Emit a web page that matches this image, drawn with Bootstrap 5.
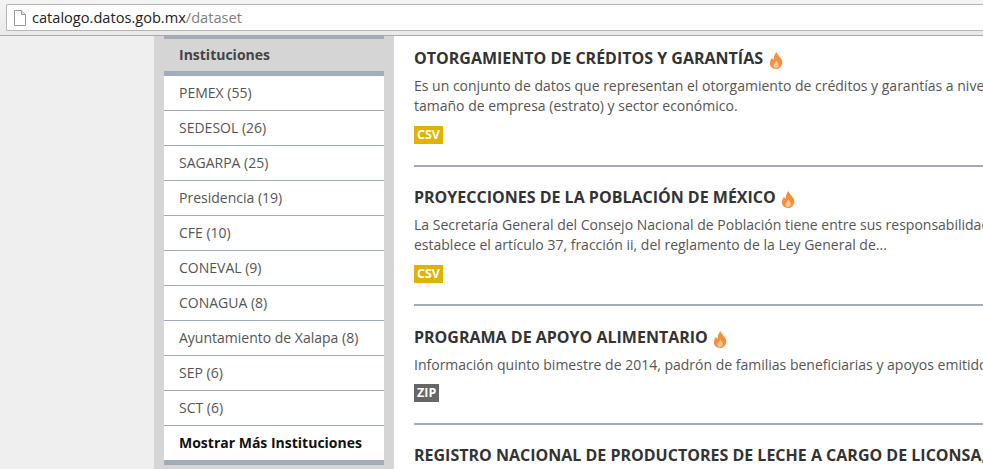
<!DOCTYPE html>
<html lang="es">
<head>
<meta charset="utf-8">
<link href="https://cdn.jsdelivr.net/npm/bootstrap@5.3.0/dist/css/bootstrap.min.css" rel="stylesheet">
<style>
html,body{height:469px;overflow:hidden}
body{background:#efefef;font-family:"Open Sans","Noto Sans",sans-serif;color:#555}
.chrome-bar{height:36px;background:linear-gradient(#f4f4f4,#e9e9e9);border-bottom:1px solid #a9a9a9;padding:4px 0 0 6px}
.url-box{height:27px;background:#fff;border:1px solid #b5b5b5;border-right:0;border-radius:2px 0 0 2px;padding-left:7px;gap:6px;font-size:14.6px;line-height:25px;color:#222;white-space:nowrap}
.url-path{color:#808080}
.page-area{height:433px;overflow:hidden}
.side-gap{width:154px;flex:none}
.side-col{width:240px;flex:none;background:#d5d5d5;padding:0 10px}
.side-head{height:40px;background:#d5d5d5;border-top:3px solid #a3abb8;border-bottom:5px solid #a3abb8;font-size:14px;font-weight:700;color:#444;line-height:32px;padding-left:15px}
.side-list{background:#fff;border-bottom:5px solid #a3abb8}
.side-item{height:35px;border-bottom:1px solid #a3abb8;padding-left:15px;font-size:14px;line-height:34px;color:#555;white-space:nowrap}
.side-more{height:34px;border:0;font-weight:700;color:#111;line-height:33px}
.main-col{background:#fff;flex:1 1 0;min-width:0;padding:10px 0 0 20px;overflow:hidden}
.data-row{border-bottom:2px solid #a3abb8;white-space:nowrap;padding-bottom:21px;margin-bottom:18px}
.data-row:nth-child(2){margin-bottom:19px}
.data-row:nth-child(3) .fmt-tag{margin-top:9px}
.data-title{font-size:16px;font-weight:700;color:#333;line-height:24px;margin:0;display:flex;align-items:center;gap:5.500px}
.data-title svg{margin-top:4px}
.data-desc{font-size:14px;line-height:20px;color:#555;margin:6px 0 0}
.fmt-tag{display:block;width:max-content;font-size:12.500px;font-weight:700;color:#fff;height:18px;line-height:18px;padding:0 3px;margin-top:10px}
.fmt-csv{background:#dfb300}
.fmt-zip{background:#666}
</style>
</head>
<body>
<svg width="0" height="0" class="d-block position-absolute"><defs><symbol id="flame" viewBox="0 0 14 17"><path d="M7.500 0c.6 3 4 5 5.500 8.500 1.300 3.700-1.500 8.500-6 8.500-4 0-6.800-3.300-6-7 .4-2 1.500-3 2-4.500.4 1.200.8 2 1.600 2.600C4.500 5.500 5.500 2.500 7.500 0z" fill="#f3903f"/><path d="M7.300 8.500c.9 1.700 2.900 3 2.300 5.400-.4 1.300-1.600 2.100-2.900 2.100-1.500-.2-2.500-1.500-2.200-3 .4-1.600 2.300-2.500 2.800-4.500z" fill="#fbc798"/></symbol></defs></svg>
<div class="chrome-bar">
  <div class="url-box d-flex align-items-center">
    <svg width="12" height="16" viewBox="0 0 12 16"><path d="M.5.5h7l4 4v11H.5z" fill="#fff" stroke="#999"/><path d="M7.500.5v4h4" fill="#e8e8e8" stroke="#999"/></svg>
    <span>catalogo.datos.gob.mx<span class="url-path">/dataset</span></span>
  </div>
</div>
<div class="page-area d-flex">
  <div class="side-gap"></div>
  <div class="side-col">
    <div class="side-head">Instituciones</div>
    <div class="side-list">
      <div class="side-item">PEMEX (55)</div>
      <div class="side-item">SEDESOL (26)</div>
      <div class="side-item">SAGARPA (25)</div>
      <div class="side-item">Presidencia (19)</div>
      <div class="side-item">CFE (10)</div>
      <div class="side-item">CONEVAL (9)</div>
      <div class="side-item">CONAGUA (8)</div>
      <div class="side-item">Ayuntamiento de Xalapa (8)</div>
      <div class="side-item">SEP (6)</div>
      <div class="side-item">SCT (6)</div>
      <div class="side-item side-more">Mostrar Más Instituciones</div>
    </div>
  </div>
  <div class="main-col">
    <div class="data-row">
      <h3 class="data-title">OTORGAMIENTO DE CRÉDITOS Y GARANTÍAS <svg width="14" height="17"><use href="#flame"/></svg></h3>
      <p class="data-desc">Es un conjunto de datos que representan el otorgamiento de créditos y garantías a nivel<br>tamaño de empresa (estrato) y sector económico.</p>
      <span class="fmt-tag fmt-csv">CSV</span>
    </div>
    <div class="data-row">
      <h3 class="data-title">PROYECCIONES DE LA POBLACIÓN DE MÉXICO <svg width="14" height="17"><use href="#flame"/></svg></h3>
      <p class="data-desc">La Secretaría General del Consejo Nacional de Población tiene entre sus responsabilidades<br>establece el artículo 37, fracción ii, del reglamento de la Ley General de...</p>
      <span class="fmt-tag fmt-csv">CSV</span>
    </div>
    <div class="data-row">
      <h3 class="data-title">PROGRAMA DE APOYO ALIMENTARIO <svg width="14" height="17"><use href="#flame"/></svg></h3>
      <p class="data-desc">Información quinto bimestre de 2014, padrón de familias beneficiarias y apoyos emitidos</p>
      <span class="fmt-tag fmt-zip">ZIP</span>
    </div>
    <div class="data-row border-0">
      <h3 class="data-title">REGISTRO NACIONAL DE PRODUCTORES DE LECHE A CARGO DE LICONSA,</h3>
    </div>
  </div>
</div>
</body>
</html>
